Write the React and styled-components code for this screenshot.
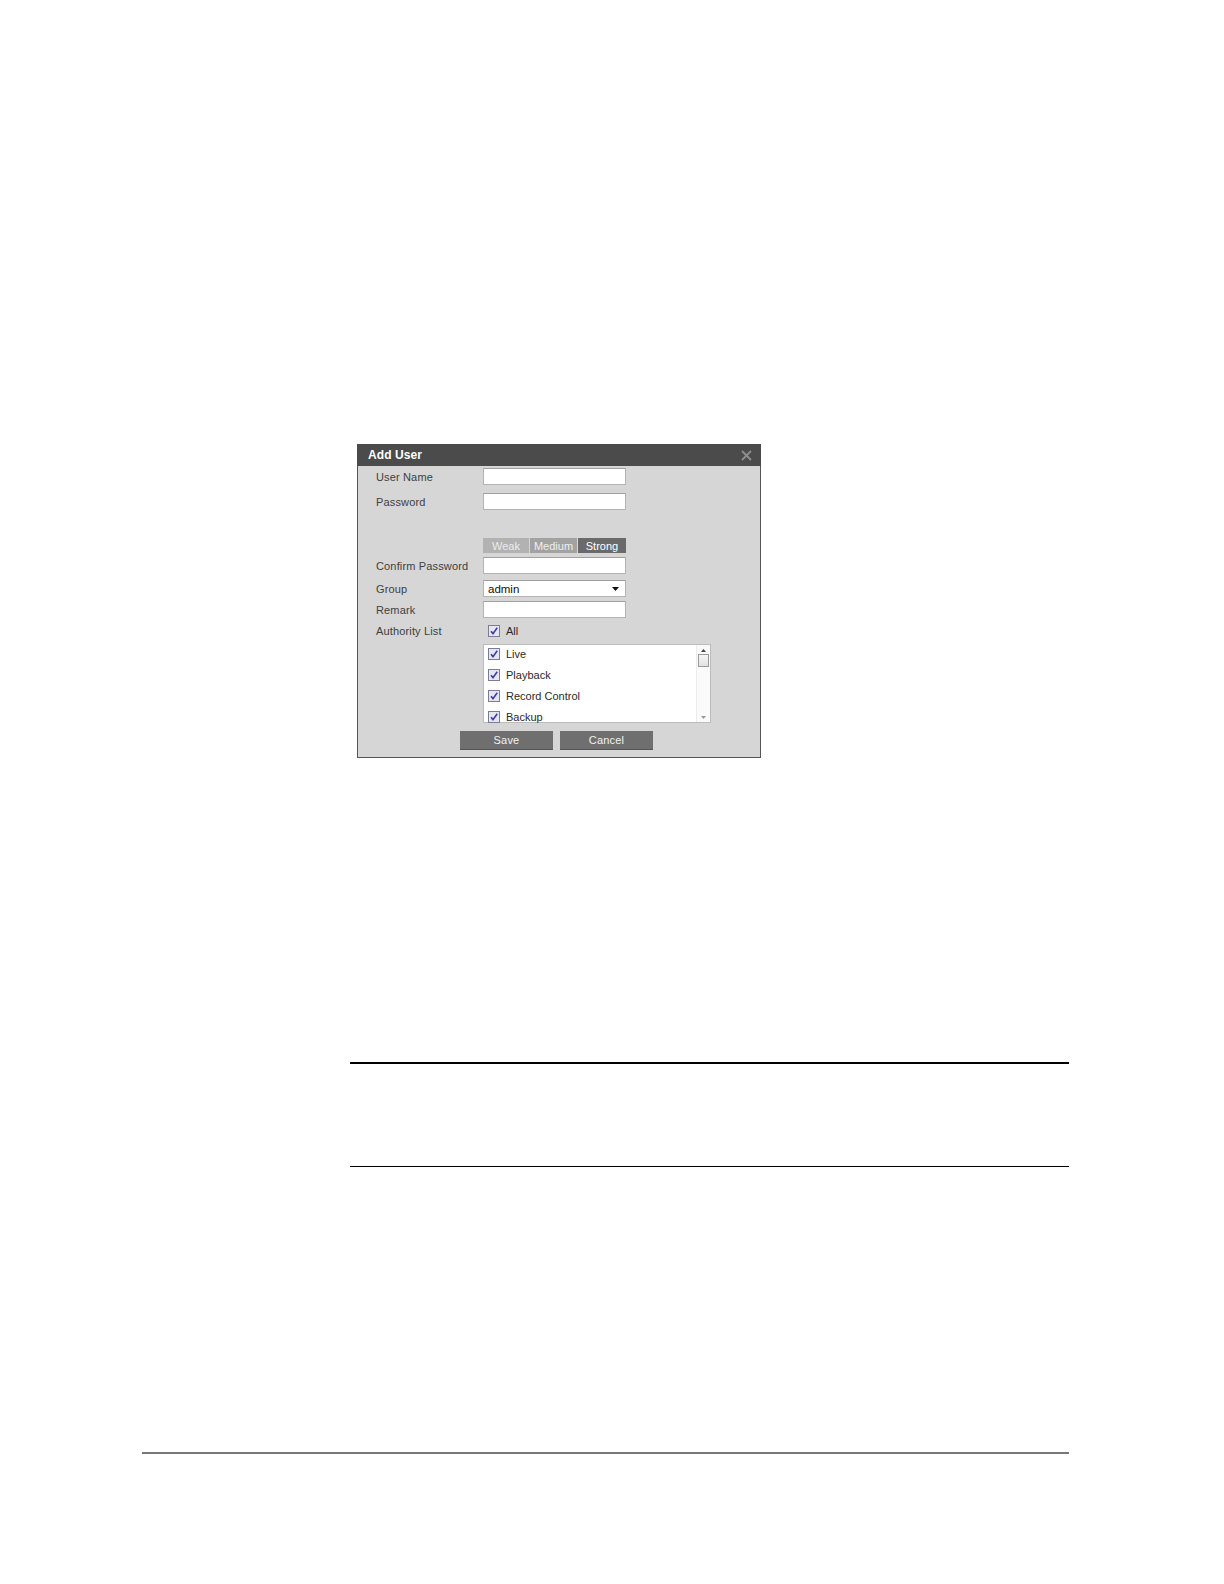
import React from "react";
import styled, { createGlobalStyle } from "styled-components";

const GlobalStyle = createGlobalStyle`
  body {
    margin: 0;
    background: #ffffff;
    font-family: "Liberation Sans", Arial, sans-serif;
  }
`;

const Page = styled.div`
  width: 1224px;
  height: 1584px;
  padding-top: 444px;
  box-sizing: border-box;
  background: #ffffff;
`;

const Dialog = styled.div`
  margin-left: 357px;
  width: 404px;
  height: 314px;
  box-sizing: border-box;
  border: 1px solid #555555;
  border-top: none;
  background: #d6d6d6;
  display: flex;
  flex-direction: column;
`;

const Header = styled.div`
  height: 22px;
  margin: 0 -1px;
  background: #4b4b4b;
  display: flex;
  align-items: center;
  justify-content: space-between;
  padding: 0 9px 0 11px;
`;

const Title = styled.span`
  color: #ffffff;
  font-size: 12px;
  font-weight: bold;
  letter-spacing: 0.1px;
`;

const Body = styled.div`
  padding-left: 18px;
  display: flex;
  flex-direction: column;
`;

const Row = styled.div`
  display: flex;
  align-items: center;
  height: ${(p) => p.$h || 17}px;
  margin-top: ${(p) => p.$top}px;
`;

const Label = styled.span`
  width: 107px;
  flex-shrink: 0;
  font-size: 11px;
  color: #404040;
  letter-spacing: 0.15px;
`;

const Input = styled.div`
  width: 143px;
  height: 17px;
  box-sizing: border-box;
  background: #ffffff;
  border: 1px solid #b4b4b4;
  border-top-color: #a0a0a0;
`;

const Select = styled(Input)`
  display: flex;
  align-items: center;
  justify-content: space-between;
  padding: 0 6px 0 4px;
  font-size: 11.5px;
  color: #111111;
`;

const Strength = styled.div`
  display: flex;
  gap: 1px;
  width: 143px;
  height: 15px;
`;

const Level = styled.div`
  flex: ${(p) => p.$w};
  background: ${(p) => p.$bg};
  color: ${(p) => p.$fg};
  font-size: 11px;
  display: flex;
  align-items: center;
  justify-content: center;
`;

const CheckLine = styled.div`
  display: flex;
  align-items: center;
  gap: 6px;
  font-size: 11px;
  color: #2a2a2a;
  padding-left: ${(p) => p.$pad || 0}px;
`;

const ListBox = styled.div`
  width: 228px;
  height: 79px;
  box-sizing: border-box;
  background: #ffffff;
  border: 1px solid #bcbcbc;
  display: flex;
`;

const ListItems = styled.div`
  flex: 1;
  display: flex;
  flex-direction: column;
  padding: 3px 0 0 4px;
  gap: 9px;
`;

const ScrollBar = styled.div`
  width: 14px;
  border-left: 1px solid #ececec;
  background: #fafafa;
  display: flex;
  flex-direction: column;
  align-items: center;
  justify-content: space-between;
  padding: 4px 0 3px;
  box-sizing: border-box;
`;

const Thumb = styled.div`
  width: 11px;
  height: 13px;
  box-sizing: border-box;
  border: 1px solid #9a9a9a;
  background: linear-gradient(#f6f6f6, #e2e2e2);
  margin-top: 2px;
`;

const Spacer = styled.div`
  flex: 1;
`;

const Buttons = styled.div`
  display: flex;
  justify-content: center;
  gap: 7px;
  margin: 8px 0 0 -18px;
  padding-right: 5px;
`;

const Button = styled.button`
  width: 93px;
  height: 19px;
  border: none;
  border-bottom: 1px solid #555555;
  background: #6f6f6f;
  color: #f2f2f2;
  font-family: "Liberation Sans", Arial, sans-serif;
  font-size: 11px;
  letter-spacing: 0.2px;
  padding: 0;
`;

const Rule = styled.div`
  margin-left: ${(p) => p.$left}px;
  width: ${(p) => p.$width}px;
  height: ${(p) => p.$h}px;
  background: ${(p) => p.$color};
  margin-top: ${(p) => p.$top}px;
`;

function Check() {
  return (
    <svg width="12" height="12" viewBox="0 0 12 12">
      <rect x="0.5" y="0.5" width="11" height="11" fill="#e6e6f2" stroke="#7c7c96" />
      <path d="M3 6.2 L5 8.6 L9.2 2.8" fill="none" stroke="#3c3ca8" strokeWidth="1.6" />
    </svg>
  );
}

function CloseIcon() {
  return (
    <svg width="11" height="11" viewBox="0 0 11 11">
      <path d="M1 1 L10 10 M10 1 L1 10" stroke="#8e8e8e" strokeWidth="1.8" />
    </svg>
  );
}

const authorities = ["Live", "Playback", "Record Control", "Backup"];

export default function App() {
  return (
    <Page>
      <GlobalStyle />
      <Dialog>
        <Header>
          <Title>Add User</Title>
          <CloseIcon />
        </Header>
        <Body>
          <Row $top={2}>
            <Label>User Name</Label>
            <Input />
          </Row>
          <Row $top={8}>
            <Label>Password</Label>
            <Input />
          </Row>
          <Row $top={28} $h={15}>
            <Label />
            <Strength>
              <Level $w={46} $bg="#b2b2b2" $fg="#ececec">Weak</Level>
              <Level $w={47} $bg="#a2a2a2" $fg="#f0f0f0">Medium</Level>
              <Level $w={48} $bg="#6a6a6a" $fg="#ffffff">Strong</Level>
            </Strength>
          </Row>
          <Row $top={4}>
            <Label>Confirm Password</Label>
            <Input />
          </Row>
          <Row $top={6}>
            <Label>Group</Label>
            <Select>
              <span>admin</span>
              <svg width="7" height="4" viewBox="0 0 7 4">
                <path d="M0 0 H7 L3.5 4 Z" fill="#111" />
              </svg>
            </Select>
          </Row>
          <Row $top={4}>
            <Label>Remark</Label>
            <Input />
          </Row>
          <Row $top={7} $h={12}>
            <Label>Authority List</Label>
            <CheckLine $pad={5}>
              <Check />
              All
            </CheckLine>
          </Row>
          <Row $top={7} $h={79}>
            <Label />
            <ListBox>
              <ListItems>
                {authorities.map((a) => (
                  <CheckLine key={a}>
                    <Check />
                    {a}
                  </CheckLine>
                ))}
              </ListItems>
              <ScrollBar>
                <svg width="5" height="3" viewBox="0 0 5 3">
                  <path d="M0 3 H5 L2.5 0 Z" fill="#444" />
                </svg>
                <Thumb />
                <Spacer />
                <svg width="5" height="3" viewBox="0 0 5 3">
                  <path d="M0 0 H5 L2.5 3 Z" fill="#999" />
                </svg>
              </ScrollBar>
            </ListBox>
          </Row>
          <Buttons>
            <Button>Save</Button>
            <Button>Cancel</Button>
          </Buttons>
        </Body>
      </Dialog>
      <Rule $left={350} $width={719} $h={2} $color="#000000" $top={304} />
      <Rule $left={350} $width={719} $h={1} $color="#000000" $top={102} />
      <Rule $left={142} $width={927} $h={2} $color="#777777" $top={285} />
    </Page>
  );
}
